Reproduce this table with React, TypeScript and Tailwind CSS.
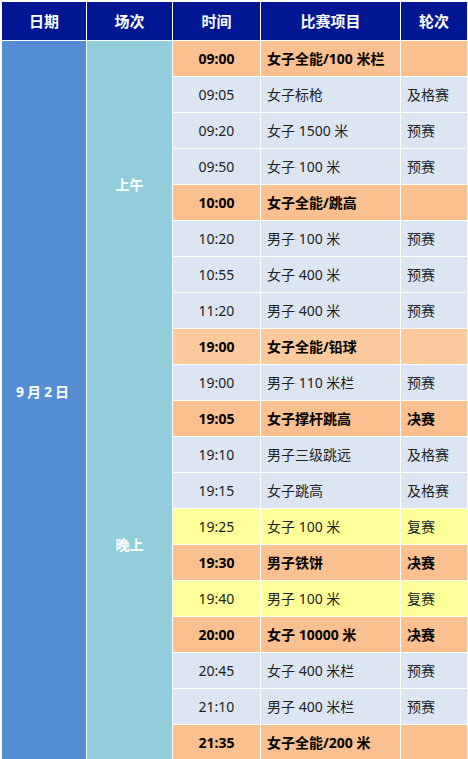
import React from 'react'

type Row = { time: string; event: string; round: string; kind: 'final' | 'heat' | 'semi'; light?: boolean }

const rows: Row[] = [
  { time: '09:00', event: '女子全能/100 米栏', round: '', kind: 'final' },
  { time: '09:05', event: '女子标枪', round: '及格赛', kind: 'heat' },
  { time: '09:20', event: '女子 1500 米', round: '预赛', kind: 'heat' },
  { time: '09:50', event: '女子 100 米', round: '预赛', kind: 'heat' },
  { time: '10:00', event: '女子全能/跳高', round: '', kind: 'final' },
  { time: '10:20', event: '男子 100 米', round: '预赛', kind: 'heat' },
  { time: '10:55', event: '女子 400 米', round: '预赛', kind: 'heat' },
  { time: '11:20', event: '男子 400 米', round: '预赛', kind: 'heat' },
  { time: '19:00', event: '女子全能/铅球', round: '', kind: 'final', light: true },
  { time: '19:00', event: '男子 110 米栏', round: '预赛', kind: 'heat' },
  { time: '19:05', event: '女子撑杆跳高', round: '决赛', kind: 'final' },
  { time: '19:10', event: '男子三级跳远', round: '及格赛', kind: 'heat' },
  { time: '19:15', event: '女子跳高', round: '及格赛', kind: 'heat' },
  { time: '19:25', event: '女子 100 米', round: '复赛', kind: 'semi' },
  { time: '19:30', event: '男子铁饼', round: '决赛', kind: 'final' },
  { time: '19:40', event: '男子 100 米', round: '复赛', kind: 'semi' },
  { time: '20:00', event: '女子 10000 米', round: '决赛', kind: 'final' },
  { time: '20:45', event: '女子 400 米栏', round: '预赛', kind: 'heat' },
  { time: '21:10', event: '男子 400 米栏', round: '预赛', kind: 'heat' },
  { time: '21:35', event: '女子全能/200 米', round: '', kind: 'final' },
]

function rowClass(r: Row) {
  if (r.kind === 'final') return r.light ? 'bg-[#fbc99c] font-bold text-black' : 'bg-[#fac090] font-bold text-black'
  if (r.kind === 'semi') return 'bg-[#ffff99] text-[#222]'
  return 'bg-[#dce6f2] text-[#222]'
}

export default function App() {
  return (
    <div
      className="w-[468px] h-[759px] overflow-hidden bg-white pt-[2px] pl-[2px]"
      style={{ fontFamily: '"Noto Sans", "Noto Sans CJK SC", sans-serif' }}
    >
      <div className="grid grid-cols-[84px_85px_87px_139px_66px] grid-rows-[38px_repeat(20,35px)] gap-px text-[14px]">
        {/* header */}
        <div className="bg-[#001793] text-white text-[15px] font-bold flex items-center justify-center">日期</div>
        <div className="bg-[#001793] text-white text-[15px] font-bold flex items-center justify-center">场次</div>
        <div className="bg-[#001793] text-white text-[15px] font-bold flex items-center justify-center">时间</div>
        <div className="bg-[#001793] text-white text-[15px] font-bold flex items-center justify-center">比赛项目</div>
        <div className="bg-[#001793] text-white text-[15px] font-bold flex items-center justify-center">轮次</div>

        <div className="row-span-20 col-start-1 row-start-2 bg-[#558ed5] text-white font-bold flex items-center justify-center pb-[18px] tracking-[3px]">
          9月2日
        </div>
        <div className="row-span-20 col-start-2 row-start-2 bg-[#92cddc] text-white font-bold flex flex-col">
          <div className="h-[287px] flex items-center justify-center">上午</div>
          <div className="flex-1 flex items-center justify-center">晚上</div>
        </div>

        {rows.map((r, i) => (
          <React.Fragment key={i}>
            <div className={`col-start-3 flex items-center justify-center ${rowClass(r)}`}>{r.time}</div>
            <div className={`col-start-4 flex items-center pl-[6px] ${rowClass(r)}`}>{r.event}</div>
            <div className={`col-start-5 flex items-center pl-[6px] ${rowClass(r)}`}>{r.round}</div>
          </React.Fragment>
        ))}
      </div>
    </div>
  )
}
